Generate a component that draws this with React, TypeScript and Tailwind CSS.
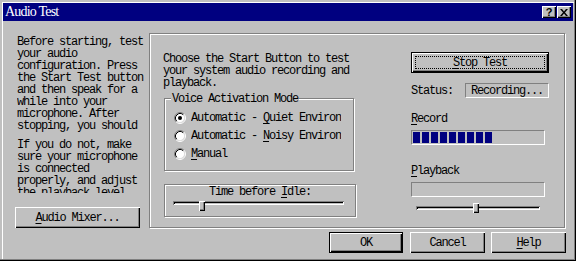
import type { ReactNode } from "react"

const mono = "font-['Liberation_Mono',monospace] text-[12px] leading-[12px] tracking-[-1.2px] text-black whitespace-nowrap"
const raised = "bg-[#c0c0c0] shadow-[inset_1px_1px_0_#fff,inset_-1px_-1px_0_#000,inset_-2px_-2px_0_#808080]"
const sunken = "border border-t-[#808080] border-l-[#808080] border-r-white border-b-white"
const etched = "border border-[#808080] shadow-[inset_1px_1px_0_#fff,1px_1px_0_#fff]"

function U({ children }: { children: ReactNode }) {
  return <span className="underline underline-offset-[2px]">{children}</span>
}

function Button({
  children,
  isDefault = false,
  focused = false,
  className = "",
}: {
  children: ReactNode
  isDefault?: boolean
  focused?: boolean
  className?: string
}) {
  return (
    <div className={`${mono} ${isDefault ? "border border-black" : ""} ${className}`}>
      <div className={`${raised} flex h-full w-full items-center justify-center ${focused ? "p-[3px]" : ""}`}>
        {focused ? (
          <div className="flex h-full w-full items-center justify-center border border-dotted border-black">
            {children}
          </div>
        ) : (
          children
        )}
      </div>
    </div>
  )
}

function Radio({ checked = false }: { checked?: boolean }) {
  return (
    <svg width="12" height="12" viewBox="0 0 12 12" className="shrink-0">
      <circle cx="6" cy="6" r="4.5" fill="#fff" />
      <path d="M2.11 9.89A5.5 5.5 0 0 1 9.89 2.11" stroke="#808080" fill="none" />
      <path d="M9.89 2.11A5.5 5.5 0 0 1 2.11 9.89" stroke="#fff" fill="none" />
      <path d="M2.82 9.18A4.5 4.5 0 0 1 9.18 2.82" stroke="#000" fill="none" />
      <path d="M9.18 2.82A4.5 4.5 0 0 1 2.82 9.18" stroke="#dfdfdf" fill="none" />
      {checked && <circle cx="6" cy="6" r="2" fill="#000" />}
    </svg>
  )
}

function RadioRow({ checked, children }: { checked?: boolean; children: ReactNode }) {
  return (
    <div className="flex h-[18px] items-center pl-[9px]">
      <Radio checked={checked} />
      <div className={`${mono} ml-[5px] w-[150px] overflow-hidden`}>{children}</div>
    </div>
  )
}

function Slider({ className, thumb }: { className: string; thumb: string }) {
  return (
    <div className={`relative h-[10px] ${className}`}>
      <div className="mt-[3px] h-[4px] bg-[#c0c0c0] shadow-[inset_1px_1px_0_#808080,inset_-1px_-1px_0_#fff,inset_2px_2px_0_#000]" />
      <div className={`absolute top-0 h-[10px] w-[6px] ${raised} ${thumb}`} />
    </div>
  )
}

const intro = [
  "Before starting, test",
  "your audio",
  "configuration. Press",
  "the Start Test button",
  "and then speak for a",
  "while into your",
  "microphone. After",
  "stopping, you should",
  "hear yourself.",
]

const help = [
  "If you do not, make",
  "sure your microphone",
  "is connected",
  "properly, and adjust",
  "the playback level",
]

export default function App() {
  return (
    <div className="flex h-[261px] w-[576px] flex-col bg-[#c0c0c0] p-[3px] shadow-[inset_-1px_-1px_0_#000,inset_-2px_-2px_0_#808080,inset_2px_2px_0_#c0c0c0,inset_3px_3px_0_#fff]">
      {/* title bar */}
      <div className="flex h-[18px] shrink-0 items-center bg-[#000080] pl-[2px] pr-[2px]">
        <span className="font-['Liberation_Serif',serif] text-[14px] leading-[14px] tracking-[-0.8px] text-white">
          Audio Test
        </span>
        <div className="ml-auto flex gap-[1px]">
          <div className={`${raised} flex h-[12px] w-[14px] items-center justify-center font-['Liberation_Sans',sans-serif] text-[11px] font-bold leading-[11px] text-black`}>
            ?
          </div>
          <div className={`${raised} flex h-[12px] w-[14px] items-center justify-center`}>
            <svg width="8" height="7" viewBox="0 0 8 7">
              <path d="M0 0h2l2 2.4L6 0h2L5 3.5 8 7H6L4 4.6 2 7H0l3-3.5z" fill="#000" />
            </svg>
          </div>
        </div>
      </div>

      {/* body */}
      <div className="flex">
        <div className="flex w-[146px] flex-col pl-[12px] pt-[15px]">
          <div className={`${mono} ml-[2px] h-[96px] overflow-hidden`}>
            {intro.map((l) => (
              <div key={l}>{l}</div>
            ))}
          </div>
          <div className={`${mono} ml-[2px] mt-[7px] h-[54px] overflow-hidden`}>
            {help.map((l) => (
              <div key={l}>{l}</div>
            ))}
          </div>
          <Button className="mt-[14px] h-[21px] w-[125px]">
            <U>A</U>udio Mixer...
          </Button>
        </div>

        <div className={`${etched} mt-[12px] flex h-[195px] w-[416px]`}>
          <div className="w-[206px] pl-[13px] pt-[19px]">
            <div className={mono}>
              <div>Choose the Start Button to test</div>
              <div>your system audio recording and</div>
              <div>playback.</div>
            </div>

            <div className={`${etched} relative ml-[1px] mt-[9px] w-[190px] pb-[7px] pt-[10px]`}>
              <div className={`${mono} absolute left-[6px] top-[-6px] bg-[#c0c0c0] px-[1px]`}>
                Voice Activation Mode
              </div>
              <RadioRow checked>
                Automatic - <U>Q</U>uiet Environment
              </RadioRow>
              <RadioRow>
                Automatic - <U>N</U>oisy Environment
              </RadioRow>
              <RadioRow>
                <U>M</U>anual
              </RadioRow>
            </div>

            <div className={`${etched} ml-[1px] mt-[13px] w-[192px] pb-[5px] pt-[1px]`}>
              <div className={`${mono} text-center`}>
                Time before <U>I</U>dle:
              </div>
              <Slider className="ml-[8px] mt-[2px] w-[171px]" thumb="left-[26px]" />
            </div>
          </div>

          <div className="ml-[55px] flex w-[138px] flex-col pt-[18px]">
            <Button isDefault focused className="h-[21px] w-[138px]">
              <U>S</U>top Test
            </Button>
            <div className="mt-[10px] flex h-[15px] items-center">
              <span className={mono}>Status:</span>
              <div className={`${sunken} ${mono} ml-auto flex h-[15px] w-[84px] items-center pl-[5px]`}>
                Recording...
              </div>
            </div>
            <div className={`${mono} mt-[15px]`}>
              <U>R</U>ecord
            </div>
            <div className={`${sunken} mt-[5px] flex h-[15px] w-[134px] gap-[2px] p-[1px]`}>
              {Array.from({ length: 9 }).map((_, i) => (
                <div key={i} className="h-[11px] w-[7px] bg-[#000080]" />
              ))}
            </div>
            <div className={`${mono} mt-[20px]`}>
              <U>P</U>layback
            </div>
            <div className={`${sunken} mt-[5px] h-[15px] w-[134px]`} />
            <Slider className="ml-[5px] mt-[6px] w-[124px]" thumb="left-[57px]" />
          </div>
        </div>
      </div>

      {/* dialog buttons */}
      <div className="mt-[4px] flex justify-end pr-[7px]">
        <Button isDefault className="mr-[7px] h-[21px] w-[74px]">
          OK
        </Button>
        <Button className="mr-[6px] h-[21px] w-[75px]">Cancel</Button>
        <Button className="h-[21px] w-[75px]">
          <U>H</U>elp
        </Button>
      </div>
    </div>
  )
}
